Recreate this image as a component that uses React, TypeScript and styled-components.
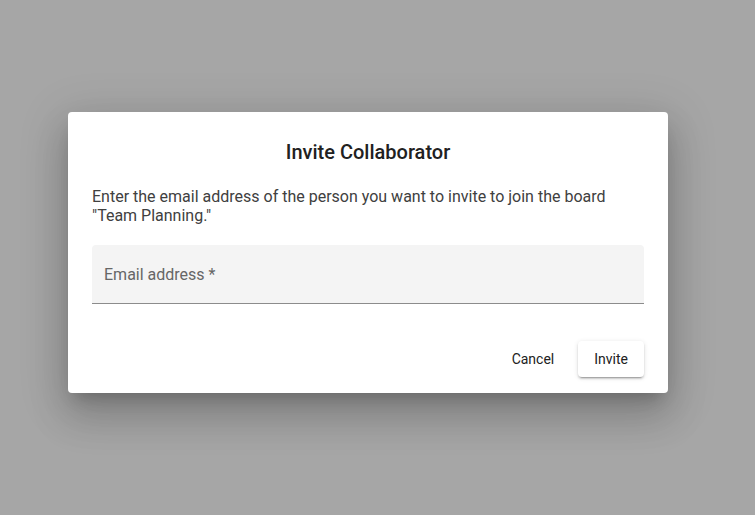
import styled, { createGlobalStyle } from "styled-components";

const GlobalStyle = createGlobalStyle`
	html, body {
		margin: 0;
		padding: 0;
		height: 100%;
	}
	body {
		font-family: Roboto, "Liberation Sans", sans-serif;
		background-color: #a6a6a6;
	}
	#root {
		height: 100%;
	}
`;

function App() {
	return (
		<>
			<GlobalStyle />
			<StBackdrop>
				<StDialog>
					<StTitle>Invite Collaborator</StTitle>
					<StBody>
						Enter the email address of the person you want to invite to join the board
						"Team Planning."
					</StBody>
					<StField>
						<StLabel>Email address *</StLabel>
					</StField>
					<StActions>
						<StButton>Cancel</StButton>
						<StButton $raised>Invite</StButton>
					</StActions>
				</StDialog>
			</StBackdrop>
		</>
	);
}

export default App;

const StBackdrop = styled.div`
	height: 515px;
	display: flex;
	justify-content: center;
	padding: 112px 19px 0 0;
	box-sizing: border-box;
`;

const StDialog = styled.div`
	width: 600px;
	height: 281px;
	box-sizing: border-box;
	background-color: #fff;
	border-radius: 4px;
	box-shadow: 0 11px 15px -7px rgba(0, 0, 0, 0.2), 0 24px 38px 3px rgba(0, 0, 0, 0.14),
		0 9px 46px 8px rgba(0, 0, 0, 0.12);
	padding: 24px 24px 16px;
	display: flex;
	flex-direction: column;
`;

const StTitle = styled.h2`
	margin: 0;
	font-size: 20px;
	font-weight: 500;
	line-height: 32px;
	color: #212121;
	text-align: center;
`;

const StBody = styled.p`
	margin: 19px 0 0;
	font-size: 16px;
	line-height: 19px;
	color: #404040;
`;

const StField = styled.div`
	margin-top: 20px;
	height: 59px;
	box-sizing: border-box;
	background-color: #f4f4f4;
	border-radius: 4px 4px 0 0;
	border-bottom: 1px solid #8c8c8c;
	padding: 0 12px;
	display: flex;
	align-items: center;
`;

const StLabel = styled.span`
	font-size: 16px;
	color: #666;
`;

const StActions = styled.div`
	margin-top: auto;
	display: flex;
	justify-content: flex-end;
	gap: 8px;
`;

const StButton = styled.button<{ $raised?: boolean }>`
	height: 36px;
	min-width: 64px;
	padding: 0 16px;
	border: none;
	border-radius: 4px;
	font-family: Roboto, "Liberation Sans", sans-serif;
	font-size: 14px;
	color: #212121;
	background-color: ${(p) => (p.$raised ? "#fff" : "transparent")};
	box-shadow: ${(p) =>
		p.$raised
			? "0 3px 1px -2px rgba(0,0,0,0.2), 0 2px 2px 0 rgba(0,0,0,0.14), 0 1px 5px 0 rgba(0,0,0,0.12)"
			: "none"};
`;
